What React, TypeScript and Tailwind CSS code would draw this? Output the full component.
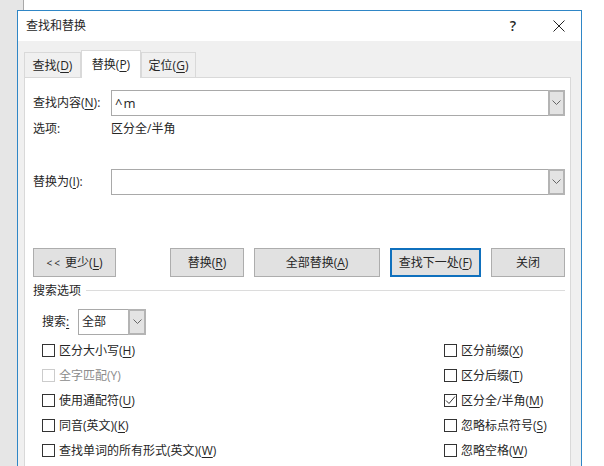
const font = "font-['Open_Sans','Noto_Sans_CJK_SC',sans-serif]";

function Key({ k }: { k: string }) {
  return (
    <>
      (<span className="underline underline-offset-2">{k}</span>)
    </>
  );
}

function Chevron() {
  return (
    <svg width="9" height="6" viewBox="0 0 9 6" fill="none" stroke="#666" strokeWidth="1">
      <path d="M0.5 0.5 L4.5 4.5 L8.5 0.5" />
    </svg>
  );
}

function Combo({ children }: { children?: React.ReactNode }) {
  return (
    <div className="flex h-[26px] w-[454px] items-center border border-[#a9a9a9] bg-white">
      <div className="flex-1 pl-[3px] text-[13px] tracking-[1px]">{children}</div>
      <div className="flex h-[26px] w-[17px] -mr-px items-center justify-center border-2 border-[#b4b4b4] bg-[#e3e3e3]">
        <Chevron />
      </div>
    </div>
  );
}

function Btn({ w, focus, children }: { w: string; focus?: boolean; children: React.ReactNode }) {
  return (
    <div
      className={`flex h-[29px] items-center justify-center bg-[#e1e1e1] ${w} ${
        focus ? "border-2 border-[#0f70bd]" : "border border-[#adadad]"
      }`}
    >
      {children}
    </div>
  );
}

function Check({ label, k, checked, disabled }: { label: string; k: string; checked?: boolean; disabled?: boolean }) {
  return (
    <div className={`flex h-[25px] items-center gap-1 ${disabled ? "text-[#8c8c8c]" : ""}`}>
      <div
        className={`flex h-[13px] w-[13px] items-center justify-center border bg-white ${
          disabled ? "border-[#cccccc]" : "border-[#333333]"
        }`}
      >
        {checked && (
          <svg width="11" height="11" viewBox="0 0 11 11" fill="none" stroke="#333" strokeWidth="1">
            <path d="M1 5.5 L4 8.5 L10 1.5" />
          </svg>
        )}
      </div>
      <span>
        {label}
        {disabled ? `(${k})` : <Key k={k} />}
      </span>
    </div>
  );
}

export default function App() {
  return (
    <div className={`relative h-[466px] w-[604px] overflow-hidden bg-white text-[12px] leading-none text-[#262626] ${font}`}>
      <div className="h-full w-6 border-r border-[#a8a8a8] bg-[#e6e6e6]" />
      <div className="absolute left-0 top-[10px] h-full w-[17px] bg-[#e6e6e6]" />
      <div className="absolute left-[17px] top-[10px] flex h-[480px] w-[565px] flex-col border border-[#2f86c6] bg-[#f0f0f0]">
        <div className="flex h-[30px] shrink-0 items-center bg-white pl-2">
          <span className="flex-1">查找和替换</span>
          <span className="mr-[37px] text-[14px] font-semibold">?</span>
          <svg className="mr-4" width="12" height="12" viewBox="0 0 12 12" fill="none" stroke="#222" strokeWidth="1">
            <path d="M0.5 0.5 L11.5 11.5 M11.5 0.5 L0.5 11.5" />
          </svg>
        </div>
        <div className="flex flex-1 flex-col pl-[6px] pr-[10px]">
          <div className="relative z-10 flex h-[36px] items-end">
            <div className="flex h-[25px] w-[57px] items-center justify-center border border-b-0 border-[#d9d9d9] pt-px">
              <span>查找<Key k="D" /></span>
            </div>
            <div className="flex h-[28px] w-[60px] -mb-px items-center justify-center border border-b-0 border-[#d9d9d9] bg-white">
              <span>替换<Key k="P" /></span>
            </div>
            <div className="flex h-[25px] w-[55px] items-center justify-center border border-b-0 border-[#d9d9d9] pt-px">
              <span>定位<Key k="G" /></span>
            </div>
          </div>
          <div className="flex-1 border border-[#d9d9d9] bg-white pl-2 pr-[5px] pt-3">
            <div className="flex items-center justify-between">
              <span>查找内容<Key k="N" />:</span>
              <Combo>^m</Combo>
            </div>
            <div className="mt-[3px] flex h-[20px] items-center">
              <span className="w-[78px]">选项:</span>
              <span>区分全/半角</span>
            </div>
            <div className="mt-[30px] flex items-center justify-between">
              <span>替换为<Key k="I" />:</span>
              <Combo />
            </div>
            <div className="mt-[53px] flex">
              <Btn w="w-[83px]">
                <span><span className="text-[10px] tracking-[2px]">&lt;&lt;</span> 更少<Key k="L" /></span>
              </Btn>
              <div className="ml-[54px] flex gap-[10px]">
                <Btn w="w-[74px]"><span>替换<Key k="R" /></span></Btn>
                <Btn w="w-[126px]"><span>全部替换<Key k="A" /></span></Btn>
                <Btn w="w-[91px]" focus><span>查找下一处<Key k="F" /></span></Btn>
                <Btn w="w-[74px]"><span>关闭</span></Btn>
              </div>
            </div>
            <div className="mt-[7px] flex h-[13px] items-center gap-[5px]">
              <span>搜索选项</span>
              <div className="h-px flex-1 bg-[#dcdcdc]" />
            </div>
            <div className="ml-[9px] mt-[12px] flex h-[26px] items-center gap-[3px]">
              <span className="w-[33px]">搜索<span className="underline underline-offset-2">:</span></span>
              <div className="flex h-[26px] w-[68px] items-center border border-[#a9a9a9] pl-[3px] text-[12px]">
                <span className="flex-1">全部</span>
                <div className="flex h-[26px] w-[18px] -mr-px items-center justify-center border-2 border-[#b4b4b4] bg-[#e3e3e3]">
                  <Chevron />
                </div>
              </div>
            </div>
            <div className="ml-[9px] mt-[3px] grid grid-cols-[402px_1fr]">
              <div className="flex flex-col">
                <Check label="区分大小写" k="H" />
                <Check label="全字匹配" k="Y" disabled />
                <Check label="使用通配符" k="U" />
                <Check label="同音(英文)" k="K" />
                <Check label="查找单词的所有形式(英文)" k="W" />
              </div>
              <div className="flex flex-col">
                <Check label="区分前缀" k="X" />
                <Check label="区分后缀" k="T" />
                <Check label="区分全/半角" k="M" checked />
                <Check label="忽略标点符号" k="S" />
                <Check label="忽略空格" k="W" />
              </div>
            </div>
          </div>
        </div>
      </div>
    </div>
  );
}
